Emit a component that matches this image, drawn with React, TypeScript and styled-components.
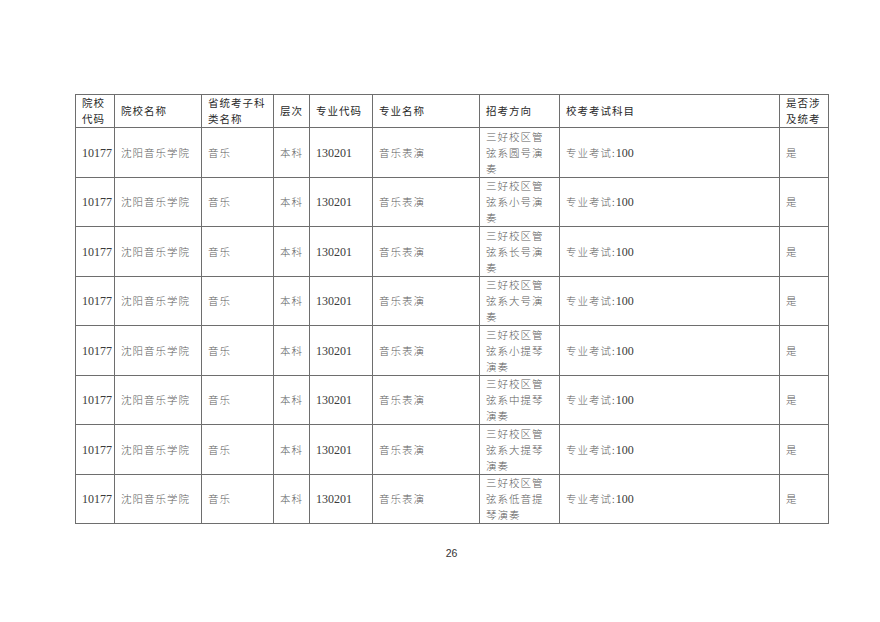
import { createGlobalStyle } from "styled-components"
import styled from "styled-components"

const GlobalStyle = createGlobalStyle`
  html, body {
    margin: 0;
    padding: 0;
    background: #ffffff;
  }
`

const Page = styled.div`
  width: 880px;
  height: 622px;
  box-sizing: border-box;
  padding: 94px 0 0 75px;
  display: flex;
  flex-direction: column;
  font-family: "Noto Sans CJK SC", "Liberation Serif", serif;
`

const Table = styled.table`
  width: 753px;
  table-layout: fixed;
  border-collapse: collapse;
`

const HeadCell = styled.th`
  border: 1px solid #6e6e6e;
  padding: 0 4px 0 6px;
  text-align: left;
  vertical-align: middle;
  font-weight: 400;
  font-size: 10.5px;
  letter-spacing: 1px;
  line-height: 16px;
  color: #2a2a2a;
`

const HeadRow = styled.tr`
  height: 33px;
`

const Row = styled.tr<{ $tall: boolean }>`
  height: ${(p) => (p.$tall ? 50 : 49)}px;
`

const Cell = styled.td<{ $wrap?: boolean }>`
  border: 1px solid #6e6e6e;
  padding: 0 ${(p) => (p.$wrap ? 8 : 3)}px 0 6px;
  vertical-align: middle;
  font-size: 10.5px;
  letter-spacing: 1px;
  line-height: 16px;
  color: #5c5c5c;
  font-weight: 300;
  white-space: ${(p) => (p.$wrap ? "normal" : "nowrap")};
`

const Num = styled.span`
  font-family: "Liberation Serif", serif;
  font-size: 12px;
  letter-spacing: 0;
  font-weight: 400;
  color: #3a3a3a;
`

const Footer = styled.div`
  width: 753px;
  margin-top: 23px;
  text-align: center;
  font-family: "Liberation Sans", sans-serif;
  font-size: 10.5px;
  color: #333;
`

const widths = [39, 87, 72, 36, 63, 107, 80, 220, 49]
const headers = ["院校代码", "院校名称", "省统考子科类名称", "层次", "专业代码", "专业名称", "招考方向", "校考考试科目", "是否涉及统考"]
const directions = ["圆号", "小号", "长号", "大号", "小提琴", "中提琴", "大提琴", "低音提琴"]

export default function App() {
  return (
    <>
      <GlobalStyle />
      <Page>
        <Table>
          <colgroup>
            {widths.map((w, i) => (
              <col key={i} style={{ width: w }} />
            ))}
          </colgroup>
          <thead>
            <HeadRow>
              {headers.map((h) => (
                <HeadCell key={h}>{h}</HeadCell>
              ))}
            </HeadRow>
          </thead>
          <tbody>
            {directions.map((d, i) => (
              <Row key={d} $tall={i % 2 === 0}>
                <Cell><Num>10177</Num></Cell>
                <Cell>沈阳音乐学院</Cell>
                <Cell>音乐</Cell>
                <Cell>本科</Cell>
                <Cell><Num>130201</Num></Cell>
                <Cell>音乐表演</Cell>
                <Cell $wrap>{`三好校区管弦系${d}演奏`}</Cell>
                <Cell>专业考试:<Num>100</Num></Cell>
                <Cell>是</Cell>
              </Row>
            ))}
          </tbody>
        </Table>
        <Footer>26</Footer>
      </Page>
    </>
  )
}
